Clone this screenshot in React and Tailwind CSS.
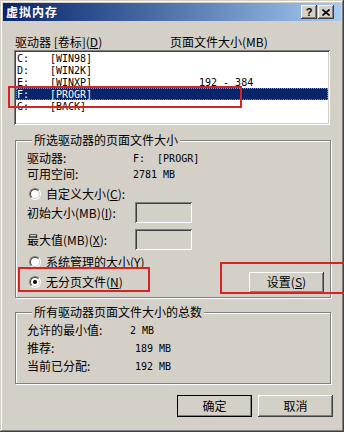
import React from "react";

const raised =
  "bg-[#d4d0c8] shadow-[inset_-1px_-1px_0_#404040,inset_1px_1px_0_#ffffff,inset_-2px_-2px_0_#808080,inset_2px_2px_0_#d4d0c8]";
const sunken =
  "shadow-[inset_1px_1px_0_#808080,inset_-1px_-1px_0_#ffffff,inset_2px_2px_0_#404040,inset_-2px_-2px_0_#d4d0c8]";
const etched = "border border-[#808080] shadow-[1px_1px_0_#ffffff,inset_1px_1px_0_#ffffff]";
const mono = "font-['DejaVu_Sans_Mono',monospace] text-[10px]";

const drives = [
  { d: "C:", label: "[WIN98]", size: "" },
  { d: "D:", label: "[WIN2K]", size: "" },
  { d: "E:", label: "[WINXP]", size: "192 - 384" },
  { d: "F:", label: "[PROGR]", size: "", selected: true },
  { d: "G:", label: "[BACK]", size: "" },
];

function Radio({ checked }) {
  return (
    <span className="w-[12px] h-[12px] rounded-full border border-t-[#808080] border-l-[#808080] border-b-white border-r-white flex">
      <span className="flex-1 rounded-full border border-t-[#404040] border-l-[#404040] border-b-[#d4d0c8] border-r-[#d4d0c8] bg-white flex items-center justify-center">
        {checked && <span className="w-[4px] h-[4px] rounded-full bg-black" />}
      </span>
    </span>
  );
}

function Group({ title, className, children }) {
  return (
    <fieldset className={`${etched} ml-[1px] w-[316px] ${className}`}>
      <legend className="ml-[5px] px-[2px] h-[14px] leading-[14px] bg-[#d4d0c8]">{title}</legend>
      {children}
    </fieldset>
  );
}

export default function App() {
  return (
    <div className="relative w-[344px] h-[432px] overflow-hidden bg-[#d4d0c8] p-[3px] text-[12px] text-black font-['Noto_Sans_CJK_SC',sans-serif] shadow-[inset_-1px_-1px_0_#404040,inset_1px_1px_0_#d4d0c8,inset_-2px_-2px_0_#808080,inset_2px_2px_0_#ffffff]">
      {/* Title bar */}
      <div className="h-[18px] flex items-center justify-between bg-linear-to-r from-[#0a246a] to-[#a6caf0] pl-[3px] pr-[7px]">
        <span className="text-white font-bold text-[12px] tracking-[1px] leading-none">虚拟内存</span>
        <div className="flex gap-[1px]">
          <div className={`${raised} w-[16px] h-[14px] flex items-center justify-center text-[11px] font-bold leading-none font-['Liberation_Sans',sans-serif]`}>
            ?
          </div>
          <div className={`${raised} w-[16px] h-[14px] flex items-center justify-center`}>
            <svg width="8" height="7" viewBox="0 0 8 7">
              <path d="M0.5 0.5L7.5 6.5M7.5 0.5L0.5 6.5" stroke="black" strokeWidth="1.6" />
            </svg>
          </div>
        </div>
      </div>

      <div className="px-[11px]">
        <div className="mt-[14px] h-[14px] flex items-center leading-none">
          <span className="w-[156px] pl-[1px]">
            驱动器 [卷标](<u>D</u>)
          </span>
          <span>页面文件大小(MB)</span>
        </div>

        {/* Drive list */}
        <div className={`${sunken} bg-white mt-[1px] h-[75px] p-[2px]`}>
          {drives.map((r) => (
            <div
              key={r.d}
              className={`h-[12px] flex items-center ${mono} ${
                r.selected ? "bg-[#0a246a] text-white outline-1 outline-dotted outline-[#8890b8] -outline-offset-1" : ""
              }`}
            >
              <span className="w-[34px] pl-[1px]">{r.d}</span>
              <span className="w-[149px]">{r.label}</span>
              <span>{r.size}</span>
            </div>
          ))}
        </div>

        <Group title="所选驱动器的页面文件大小" className="mt-[8px] pl-[11px] pr-[6px] pb-[5px]">
          <div className="pt-[3px] h-[19px] flex items-center">
            <span className="w-[106px]">驱动器:</span>
            <span className={mono}>F:&nbsp;&nbsp;[PROGR]</span>
          </div>
          <div className="h-[16px] flex items-center">
            <span className="w-[106px]">可用空间:</span>
            <span className={mono}>2781 MB</span>
          </div>
          <div className="mt-[4px] h-[16px] flex items-center gap-[5px] pl-[2px]">
            <Radio />
            <span>
              自定义大小(<u>C</u>):
            </span>
          </div>
          <div className="h-[21px] flex items-center">
            <span className="w-[108px]">
              初始大小(MB)(<u>I</u>):
            </span>
            <div className={`${sunken} w-[57px] h-[21px]`} />
          </div>
          <div className="mt-[6px] h-[21px] flex items-center">
            <span className="w-[108px]">
              最大值(MB)(<u>X</u>):
            </span>
            <div className={`${sunken} w-[57px] h-[21px]`} />
          </div>
          <div className="mt-[4px] h-[16px] flex items-center gap-[5px] pl-[2px]">
            <Radio />
            <span>
              系统管理的大小(<u>Y</u>)
            </span>
          </div>
          <div className="mt-[2px] h-[20px] flex items-center justify-between">
            <div className="flex items-center gap-[5px] pl-[2px]">
              <Radio checked />
              <span>
                无分页文件(<u>N</u>)
              </span>
            </div>
            <button className={`${raised} w-[75px] h-[21px] leading-none`}>
              设置(<u>S</u>)
            </button>
          </div>
        </Group>

        <Group title="所有驱动器页面文件大小的总数" className="mt-[7px] pl-[11px] pb-[8px]">
          <div className="pt-[2px] h-[20px] flex items-center">
            <span className="w-[103px]">允许的最小值:</span>
            <span className={mono}>2 MB</span>
          </div>
          <div className="h-[18px] flex items-center">
            <span className="w-[108px]">推荐:</span>
            <span className={mono}>189 MB</span>
          </div>
          <div className="h-[18px] flex items-center">
            <span className="w-[108px]">当前已分配:</span>
            <span className={mono}>192 MB</span>
          </div>
        </Group>

        <div className="mt-[11px] -mr-[3px] flex justify-end gap-[6px]">
          <button className={`${raised} w-[75px] h-[22px] leading-none outline-1 outline-black -outline-offset-1`}>确定</button>
          <button className={`${raised} w-[75px] h-[22px] leading-none`}>取消</button>
        </div>
      </div>

      {/* red annotation marks */}
      <div className="absolute z-10 left-[8px] top-[86px] w-[234px] h-[22px] border-2 border-[#d42424] pointer-events-none" />
      <div className="absolute z-10 left-[18px] top-[267px] w-[132px] h-[25px] border-2 border-[#d42424] pointer-events-none" />
      <div className="absolute z-10 left-[220px] top-[262px] w-[140px] h-[32px] border-2 border-[#d42424] pointer-events-none" />
    </div>
  );
}
